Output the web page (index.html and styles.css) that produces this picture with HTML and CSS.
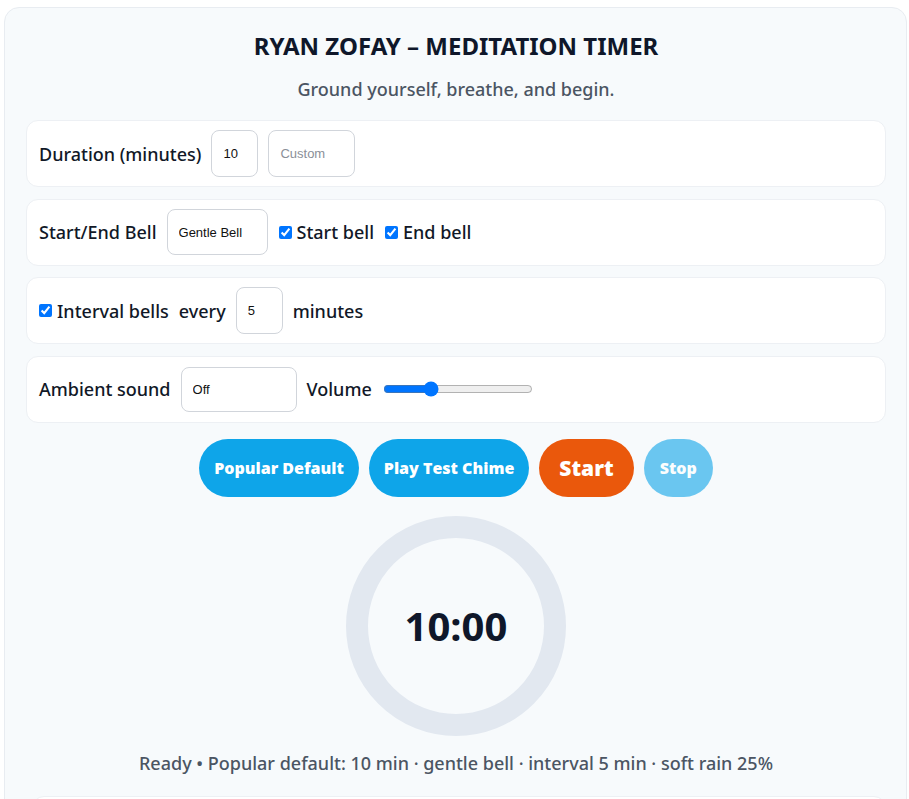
FILE: index.html
```html
<!DOCTYPE html>
<html lang="en">
<head>
<meta charset="utf-8">
<title>Ryan Zofay – Meditation Timer</title>
<link rel="stylesheet" href="styles.css">
</head>
<body>
<main class="app">
  <h1 class="title">RYAN ZOFAY – MEDITATION TIMER</h1>
  <p class="subtitle">Ground yourself, breathe, and begin.</p>

  <section class="row">
    <span class="label">Duration (minutes)</span>
    <input class="field field-num" type="text" value="10">
    <input class="field field-custom" type="text" placeholder="Custom">
  </section>

  <section class="row">
    <span class="label">Start/End Bell</span>
    <select class="field field-bell"><option>Gentle Bell</option></select>
    <label class="check"><input type="checkbox" checked>Start bell</label>
    <label class="check"><input type="checkbox" checked>End bell</label>
  </section>

  <section class="row">
    <label class="check check-first"><input type="checkbox" checked>Interval bells</label>
    <span class="label">every</span>
    <input class="field field-num" type="text" value="5">
    <span class="label">minutes</span>
  </section>

  <section class="row">
    <span class="label">Ambient sound</span>
    <select class="field field-ambient"><option>Off</option></select>
    <span class="label">Volume</span>
    <input class="volume" type="range" min="0" max="100" value="30">
  </section>

  <div class="actions">
    <button class="btn btn-blue">Popular Default</button>
    <button class="btn btn-blue">Play Test Chime</button>
    <button class="btn btn-start">Start</button>
    <button class="btn btn-blue btn-stop" disabled>Stop</button>
  </div>

  <div class="ring-wrap">
    <div class="ring"><span class="time">10:00</span></div>
  </div>

  <p class="status">Ready • Popular default: 10 min · gentle bell · interval 5 min · soft rain 25%</p>

  <section class="row row-bottom"></section>
</main>
</body>
</html>
```

FILE: styles.css
```css
html, body {
  margin: 0;
  background: #ffffff;
}
body {
  padding: 7px 2px 0 4px;
  font-family: "Noto Sans", "Open Sans", sans-serif;
  color: #111827;
  overflow: hidden;
  height: 792px;
}
.app {
  background: #f7fafc;
  border: 1px solid #e8ecf1;
  border-radius: 15px;
  padding: 23px 20px 0 21px;
  min-height: 900px;
}
.title {
  margin: 0;
  text-align: center;
  font-size: 24px;
  font-weight: 700;
  line-height: 30px;
  color: #0f172a;
}
.subtitle {
  margin: 16px 0 19px;
  text-align: center;
  font-size: 18px;
  line-height: 24px;
  color: #4b5563;
  font-weight: 500;
}
.row {
  background: #ffffff;
  border: 1px solid #edf0f4;
  border-radius: 12px;
  height: 67px;
  box-sizing: border-box;
  padding: 0 12px;
  display: flex;
  align-items: center;
  gap: 10px;
  margin-bottom: 11.5px;
}
.label, .check {
  font-size: 18px;
  font-weight: 500;
  color: #111827;
  white-space: nowrap;
}
.check {
  display: flex;
  align-items: center;
}
.check input {
  width: 13px;
  height: 13px;
  margin: 0 5px 0 1px;
  accent-color: #0075ff;
}
.check-first input {
  margin-left: 0;
}
.field {
  box-sizing: border-box;
  height: 47px;
  border: 1px solid #d1d5db;
  border-radius: 8px;
  background: #ffffff;
  font-family: "Liberation Sans", Arial, sans-serif;
  font-size: 13px;
  color: #111;
  padding: 0 11px;
  outline: none;
}
.field::placeholder {
  color: #8a8f98;
}
.field-num { width: 47px; }
.field-custom { width: 87px; }
select.field {
  appearance: none;
  -webkit-appearance: none;
}
.field-bell { width: 101px; height: 46px; }
.field-ambient { width: 116px; height: 45px; }
.volume {
  width: 150px;
  margin: 0 0 0 1px;
  accent-color: #0075ff;
}
.actions {
  display: flex;
  justify-content: center;
  gap: 10px;
  margin-top: 16px;
}
.btn {
  height: 58px;
  border: none;
  border-radius: 29px;
  color: #ffffff;
  font-family: "Open Sans", "Noto Sans", sans-serif;
  font-weight: 800;
  font-size: 16px;
  padding: 0 15px;
}
.btn-blue { background: #0ea5e9; }
.btn-start {
  background: #ea580c;
  font-size: 21px;
  padding: 0 20px;
}
.btn-stop {
  opacity: 0.6;
  padding: 0 16px;
}
.ring-wrap {
  display: flex;
  justify-content: center;
  margin-top: 19px;
}
.ring {
  width: 220px;
  height: 220px;
  box-sizing: border-box;
  border: 22px solid #e2e8f0;
  border-radius: 50%;
  display: flex;
  align-items: center;
  justify-content: center;
}
.time {
  font-size: 40px;
  font-weight: 700;
  color: #0f172a;
}
.status {
  margin: 15px 0 0;
  text-align: center;
  font-size: 18px;
  line-height: 24px;
  font-weight: 500;
  color: #4b5563;
}
.row-bottom {
  margin-top: 21px;
  margin-left: 6px;
}
```
